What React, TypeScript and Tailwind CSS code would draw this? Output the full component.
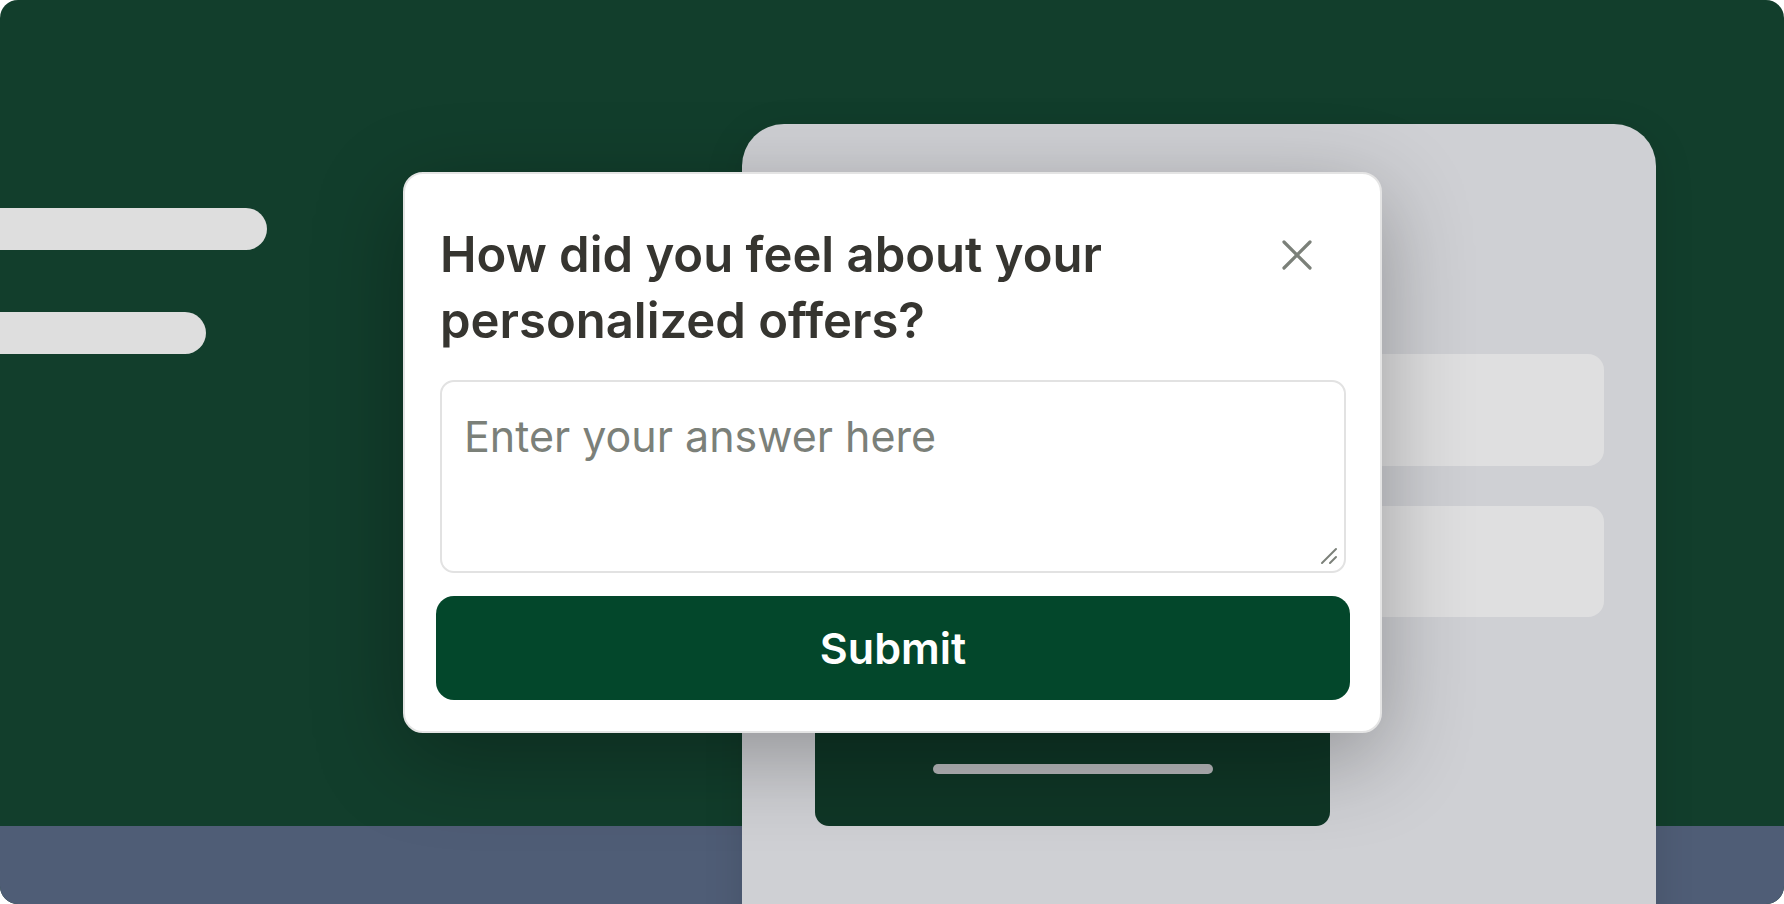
import React from "react";

export default function App() {
  return (
    <div className="w-[1784px] h-[904px] bg-white" style={{ fontFamily: "Inter, 'Noto Sans', sans-serif" }}>
      <div className="relative w-[1784px] h-[904px] overflow-hidden rounded-[18px] bg-[#123e2c]">
        {/* bottom band */}
        <div className="absolute left-0 right-0 top-[826px] h-[78px] bg-[#4f5d76]" />

        {/* left bars */}
        <div className="absolute left-0 top-[208px] w-[267px] h-[42px] rounded-r-full bg-[#dedede]" />
        <div className="absolute left-0 top-[312px] w-[206px] h-[42px] rounded-r-full bg-[#dedede]" />

        {/* phone panel */}
        <div className="absolute left-[742px] top-[124px] w-[914px] h-[840px] rounded-[42px] bg-[#cfd0d4] shadow-[0_10px_40px_rgba(0,0,0,0.12)]">
          <div className="flex flex-col gap-[40px] pt-[230px] pl-[52px] pr-[52px]">
            <div className="h-[112px] rounded-[16px] bg-[#dfdfe0]" />
            <div className="h-[111px] rounded-[16px] bg-[#dfdfe0]" />
          </div>
        </div>

        {/* dark card */}
        <div className="absolute left-[815px] top-[640px] w-[515px] h-[186px] rounded-[14px] bg-[#0f3626] flex flex-col items-center justify-end pb-[52px]">
          <div className="w-[280px] h-[10px] rounded-full bg-[#b6b7ba]" />
        </div>

        {/* modal */}
        <div className="absolute left-[403px] top-[172px] w-[979px] h-[561px] rounded-[20px] border-2 border-[#e4e4e4] bg-white shadow-[0_24px_90px_rgba(0,0,0,0.3)] flex flex-col pt-[48px] pl-[31px] pr-[30px]">
          <div className="flex items-start justify-between pl-[4px]">
            <h2 className="text-[49px] leading-[66px] font-semibold text-[#363530]">
              How did you feel about your
              <br />
              personalized offers?
            </h2>
            <button className="mt-[17px] mr-[37px] w-[32px] h-[32px] flex items-center justify-center text-[#7b8079]">
              <svg width="32" height="32" viewBox="0 0 32 32" fill="none" stroke="currentColor" strokeWidth="3.2" strokeLinecap="round">
                <path d="M3 3 L29 29" />
                <path d="M29 3 L3 29" />
              </svg>
            </button>
          </div>
          <div className="relative mt-[26px] mx-[4px] h-[193px]">
            <textarea
              className="block w-full h-full resize-none rounded-[14px] border-2 border-[#e2e2e2] bg-white px-[22px] pt-[24px] text-[43px] leading-[60px] text-[#363530] placeholder:text-[#7b8079] outline-none"
              placeholder="Enter your answer here"
              style={{ fontFamily: "Inter, 'Noto Sans', sans-serif" }}
            />
            <svg className="absolute right-[8px] bottom-[8px] pointer-events-none" width="18" height="18" viewBox="0 0 18 18" fill="none" stroke="#7b8079" strokeWidth="2" strokeLinecap="round">
              <path d="M2 16 L16 2" />
              <path d="M10 16 L16 10" />
            </svg>
          </div>
          <button className="mt-[23px] h-[104px] rounded-[18px] bg-[#03472b] text-white text-[43px] font-semibold">
            Submit
          </button>
        </div>
      </div>
    </div>
  );
}
